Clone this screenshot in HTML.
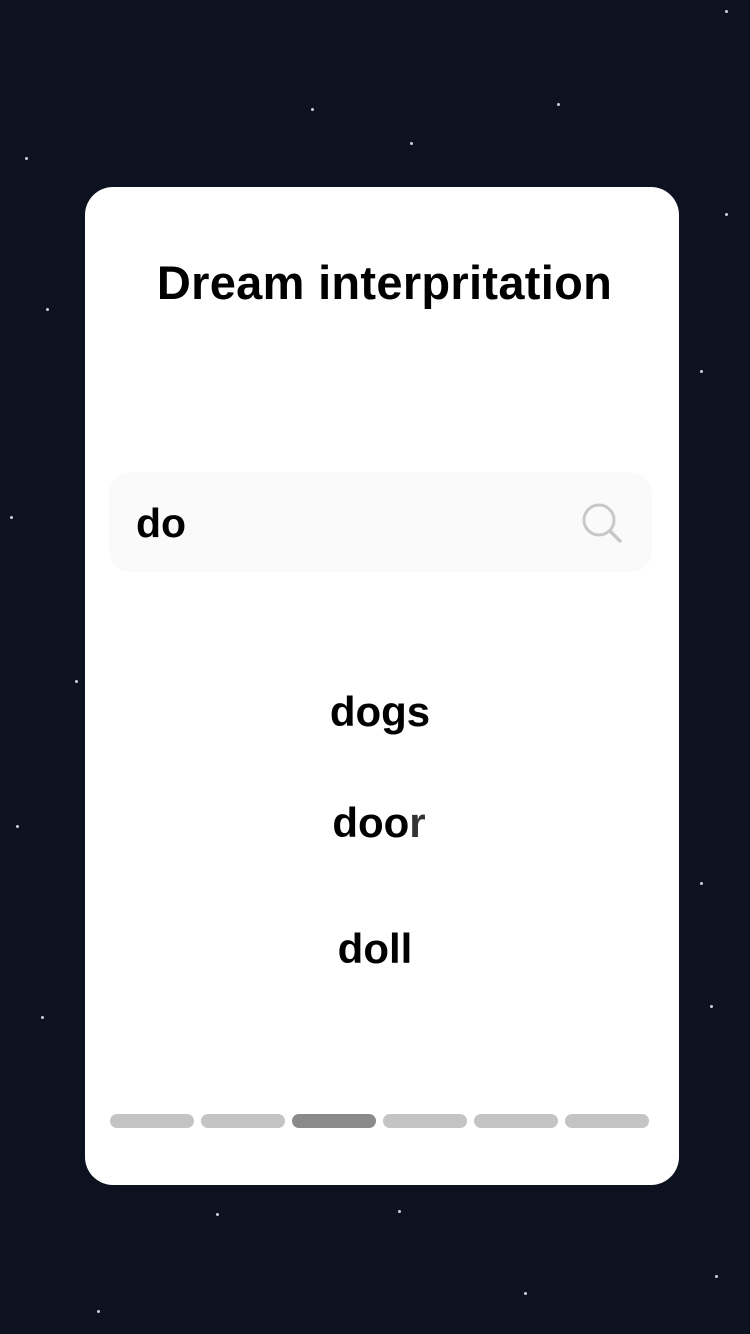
<!DOCTYPE html>
<html><head><meta charset="utf-8"><style>
html,body{margin:0;padding:0}
body{width:750px;height:1334px;background:#0c1220;position:relative;overflow:hidden;font-family:"Liberation Sans",Arial,sans-serif}
.s{position:absolute;background:#fff;border-radius:50%;width:3px;height:3px;opacity:.8}
.card{position:absolute;left:85px;top:187px;width:594px;height:998px;background:#fff;border-radius:28px}
.t{position:absolute;left:19px;right:0;top:255px;text-align:center;font-weight:bold;font-size:47px;color:#000;letter-spacing:0.3px}
.sb{position:absolute;left:109px;top:472px;width:543px;height:100px;background:#fafafa;border-radius:22px}
.sb .q{position:absolute;left:27px;top:28px;font-size:41px;font-weight:bold;color:#000}
.w{position:absolute;left:0;width:750px;text-align:center;font-size:42px;font-weight:bold;color:#000}
.b{position:absolute;top:1114px;width:84px;height:14px;border-radius:7px;background:#c4c4c4}
</style></head><body>
<div class="s" style="left:25px;top:157px"></div>
<div class="s" style="left:311px;top:108px"></div>
<div class="s" style="left:557px;top:103px"></div>
<div class="s" style="left:410px;top:142px"></div>
<div class="s" style="left:725px;top:213px"></div>
<div class="s" style="left:700px;top:370px"></div>
<div class="s" style="left:10px;top:516px"></div>
<div class="s" style="left:75px;top:680px"></div>
<div class="s" style="left:16px;top:825px"></div>
<div class="s" style="left:700px;top:882px"></div>
<div class="s" style="left:41px;top:1016px"></div>
<div class="s" style="left:710px;top:1005px"></div>
<div class="s" style="left:715px;top:1275px"></div>
<div class="s" style="left:398px;top:1210px"></div>
<div class="s" style="left:216px;top:1213px"></div>
<div class="s" style="left:97px;top:1310px"></div>
<div class="s" style="left:524px;top:1292px"></div>
<div class="s" style="left:725px;top:10px"></div>
<div class="s" style="left:46px;top:308px"></div>
<div class="card"></div>
<div class="t">Dream interpritation</div>
<div class="sb"><div class="q">do</div>
<svg style="position:absolute;left:470px;top:28px" width="46" height="46" viewBox="0 0 46 46"><circle cx="20" cy="20" r="15" fill="none" stroke="#c8c8c8" stroke-width="3"/><path d="M31 31 L41 41" stroke="#c8c8c8" stroke-width="3.5" stroke-linecap="round"/></svg>
</div>
<div class="w" style="top:688px;left:5px">dogs</div>
<div class="w" style="top:799px;left:4px">doo<span style="color:#333">r</span></div>
<div class="w" style="top:925px;left:0">doll</div>
<div class="b" style="left:110px"></div>
<div class="b" style="left:201px"></div>
<div class="b" style="left:292px;background:#8a8a8a"></div>
<div class="b" style="left:383px"></div>
<div class="b" style="left:474px"></div>
<div class="b" style="left:565px"></div>
</body></html>
